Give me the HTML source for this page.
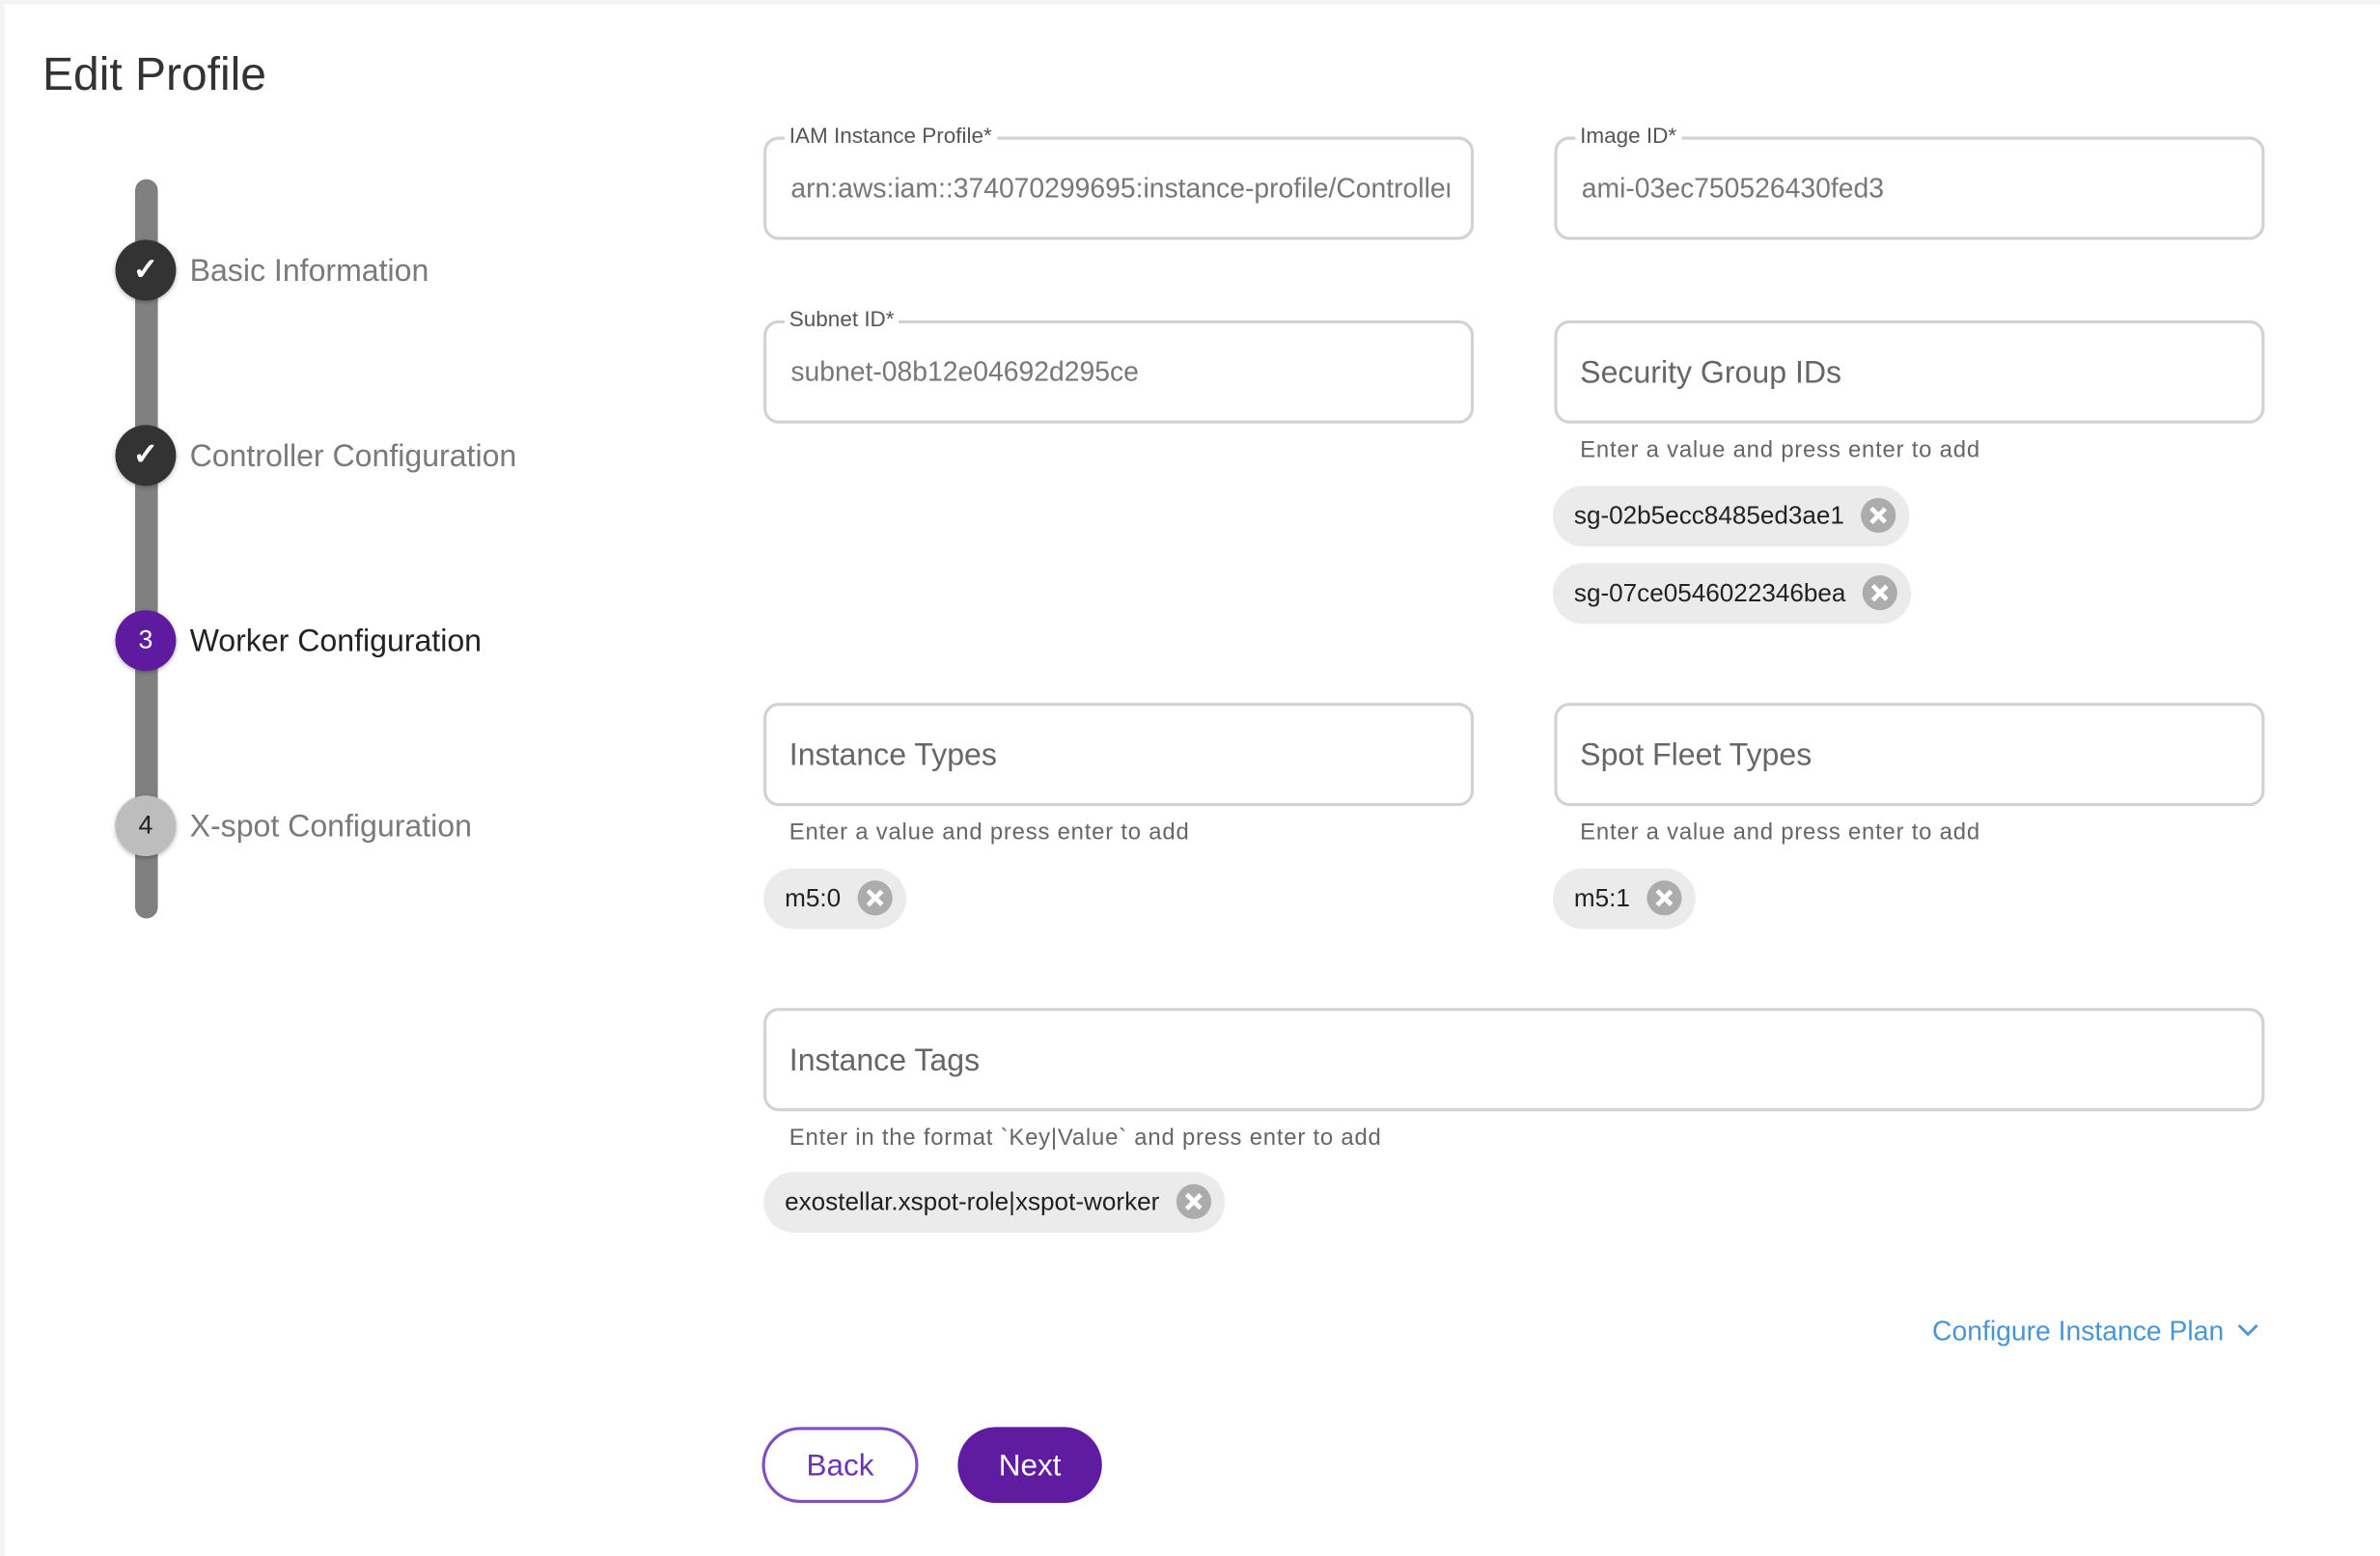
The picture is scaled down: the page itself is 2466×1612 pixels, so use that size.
<!DOCTYPE html>
<html><head><meta charset="utf-8"><style>
html,body{margin:0;padding:0;width:2466px;height:1612px;overflow:hidden;background:#f4f4f4;}
#w{position:absolute;left:0;top:0;width:1568px;height:1025px;transform:scale(1.57270);transform-origin:0 0;font-family:"Liberation Sans",sans-serif;}
.card{position:absolute;left:3px;top:3px;width:1565px;height:1022px;background:#fff;}
.a{position:absolute;white-space:nowrap;}
.bar{position:absolute;left:89px;top:118px;width:15px;height:487px;background:#808080;border-radius:8px;}
.c{position:absolute;left:76px;width:40px;height:40px;border-radius:50%;color:#fff;font-size:17px;text-align:center;line-height:40px;box-shadow:0 1px 3px rgba(0,0,0,.3);}
.c b{font-size:20px;}
.lab{position:absolute;left:125px;font-size:20.4px;color:#7a7a7a;white-space:nowrap;}
.f{position:absolute;height:64px;border:2px solid #d2d2d2;border-radius:10px;box-sizing:content-box;}
.fl{position:absolute;top:-11px;left:12px;background:#fff;padding:0 3px;font-size:14.3px;color:#555;line-height:18px;white-space:nowrap;}
.fv{position:absolute;left:16px;top:22px;font-size:18px;color:#777;overflow:hidden;white-space:nowrap;}
.ph{position:absolute;left:15px;top:22px;font-size:20.4px;color:#666;white-space:nowrap;}
.h{position:absolute;font-size:15.2px;color:#666;letter-spacing:.5px;white-space:nowrap;}
.chip{position:absolute;height:40px;border-radius:20px;background:#ebebeb;font-size:16.6px;color:#222;line-height:40px;padding-left:14px;padding-right:43px;white-space:nowrap;}
.chip i{position:absolute;right:9px;top:8px;width:23px;height:23px;border-radius:50%;background:#acacac;}
.chip i:before,.chip i:after{content:"";position:absolute;left:10.25px;top:5px;width:2.5px;height:13px;background:#fff;transform:rotate(45deg);}
.chip i:after{transform:rotate(-45deg);}
</style></head><body><div id="w">
<div class="card"></div>
<div class="a" style="left:28px;top:32px;font-size:30.5px;color:#333;">Edit Profile</div>
<div class="bar"></div>
<div class="c" style="top:158px;background:#333;"><b>✓</b></div>
<div class="c" style="top:280px;background:#333;"><b>✓</b></div>
<div class="c" style="top:402px;background:#5f1ba0;">3</div>
<div class="c" style="top:524px;background:#bdbdbd;color:#222;">4</div>
<div class="lab" style="top:168px;">Basic Information</div>
<div class="lab" style="top:290px;">Controller Configuration</div>
<div class="lab" style="top:412px;color:#222;">Worker Configuration</div>
<div class="lab" style="top:534px;">X-spot Configuration</div>

<div class="f" style="left:503px;top:90px;width:464px;"><span class="fl">IAM Instance Profile*</span><span class="fv" style="width:434px;">arn:aws:iam::374070299695:instance-profile/Controller</span></div>
<div class="f" style="left:1024px;top:90px;width:464px;"><span class="fl">Image ID*</span><span class="fv">ami-03ec750526430fed3</span></div>
<div class="f" style="left:503px;top:211px;width:464px;"><span class="fl">Subnet ID*</span><span class="fv">subnet-08b12e04692d295ce</span></div>
<div class="f" style="left:1024px;top:211px;width:464px;"><span class="ph">Security Group IDs</span></div>
<div class="h" style="left:1041px;top:288px;">Enter a value and press enter to add</div>
<div class="chip" style="left:1023px;top:320px;">sg-02b5ecc8485ed3ae1<i></i></div>
<div class="chip" style="left:1023px;top:371px;">sg-07ce0546022346bea<i></i></div>

<div class="f" style="left:503px;top:463px;width:464px;"><span class="ph">Instance Types</span></div>
<div class="h" style="left:520px;top:540px;">Enter a value and press enter to add</div>
<div class="chip" style="left:503px;top:572px;">m5:0<i></i></div>
<div class="f" style="left:1024px;top:463px;width:464px;"><span class="ph">Spot Fleet Types</span></div>
<div class="h" style="left:1041px;top:540px;">Enter a value and press enter to add</div>
<div class="chip" style="left:1023px;top:572px;">m5:1<i></i></div>

<div class="f" style="left:503px;top:664px;width:985px;"><span class="ph">Instance Tags</span></div>
<div class="h" style="left:520px;top:741px;">Enter in the format `Key|Value` and press enter to add</div>
<div class="chip" style="left:503px;top:772px;">exostellar.xspot-role|xspot-worker<i></i></div>

<div class="a" style="left:1273px;top:867px;font-size:18px;color:#4a94d8;">Configure Instance Plan <svg width="16" height="10" viewBox="0 0 16 10" style="vertical-align:2px;margin-left:3px"><path d="M2 2 L8 8 L14 2" fill="none" stroke="#4a94d8" stroke-width="1.8"/></svg></div>

<div class="a" style="left:502px;top:940px;width:99px;height:46px;border:2px solid #7e4fc0;border-radius:25px;color:#6a35b5;font-size:20px;text-align:center;line-height:48px;">Back</div>
<div class="a" style="left:631px;top:940px;width:95px;height:50px;background:#601ca0;border-radius:25px;color:#fff;font-size:20px;text-align:center;line-height:52px;">Next</div>
</div></body></html>
